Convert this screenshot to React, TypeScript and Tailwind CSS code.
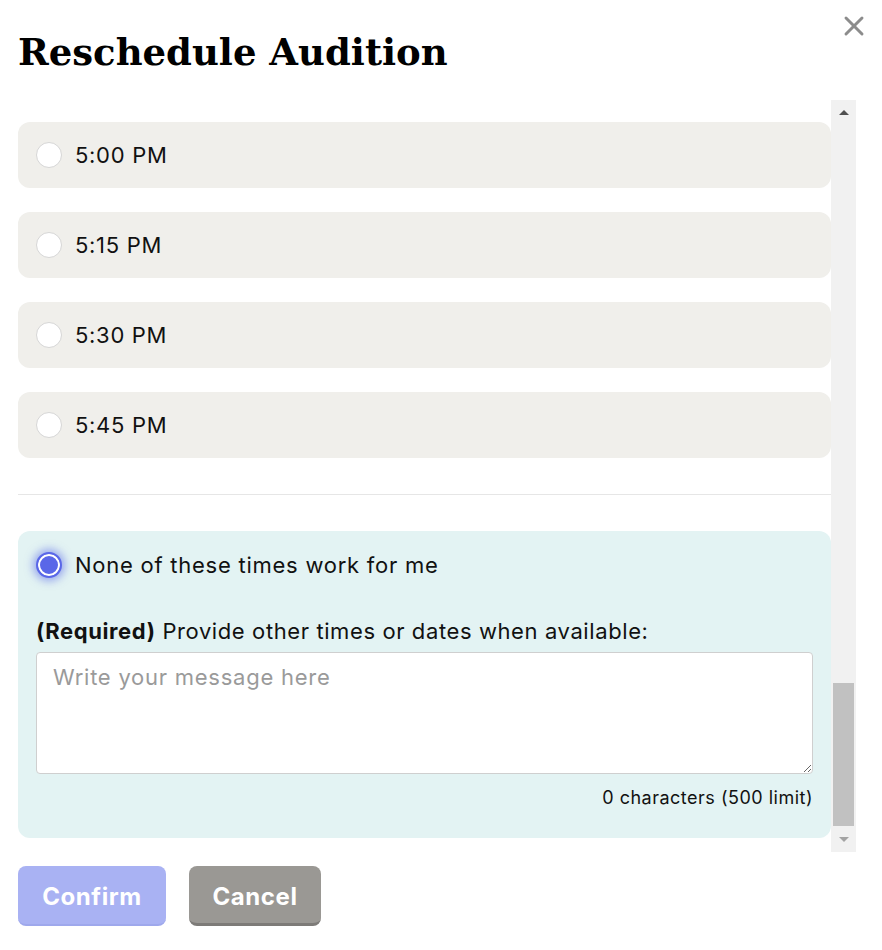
import { X } from "lucide-react"

const times = ["5:00 PM", "5:15 PM", "5:30 PM", "5:45 PM"]

function Radio({ checked }: { checked?: boolean }) {
  if (checked) {
    return (
      <span className="w-[26px] h-[26px] shrink-0 rounded-full bg-[#5a67e8] border-2 border-[#5a67e8] shadow-[inset_0_0_0_2px_#ffffff,0_0_8px_3px_rgba(90,103,232,0.55)]" />
    )
  }
  return <span className="w-[26px] h-[26px] shrink-0 rounded-full bg-white border border-[#d6d6d6]" />
}

export default function App() {
  return (
    <div className="w-[882px] h-[950px] bg-white relative overflow-hidden" style={{ fontFamily: "Inter, 'Noto Sans', sans-serif" }}>
      <button className="absolute right-[12px] top-[10px] text-[#8c8c8c]">
        <X className="w-[32px] h-[32px]" strokeWidth={2.2} />
      </button>

      <div className="h-[100px] pl-[18px] flex items-center">
        <h1 className="text-[37px] font-bold text-black pt-[6px]" style={{ fontFamily: "'DejaVu Serif', 'Liberation Serif', serif" }}>
          Reschedule Audition
        </h1>
      </div>

      <div className="flex h-[752px] pl-[18px]">
        <div className="w-[813px] overflow-hidden">
          <div className="pt-[22px] flex flex-col gap-6">
            {times.map((t) => (
              <label key={t} className="h-[66px] rounded-xl bg-[#f0efeb] flex items-center gap-[13px] pl-[18px] text-[22px] tracking-[0.7px] text-[#111]">
                <Radio />
                <span>{t}</span>
              </label>
            ))}
          </div>

          <div className="mt-[36px] border-t border-[#e6e6e6]" />

          <div className="mt-[36px] h-[307px] rounded-xl bg-[#e3f3f3] px-[18px] pt-[21px]">
            <div className="flex items-center gap-[13px] text-[22px] tracking-[0.75px] text-[#111] leading-[26px]">
              <Radio checked />
              <span>None of these times work for me</span>
            </div>
            <p className="mt-[40px] text-[22px] tracking-[0.6px] text-[#111] leading-[26px]">
              <span className="font-bold">(Required)</span> Provide other times or dates when available:
            </p>
            <textarea
              className="mt-[8px] block w-full h-[122px] rounded border border-[#cfcfcf] bg-white px-[16px] py-[8px] text-[22px] tracking-[0.75px] placeholder:text-[#9a9a9a] resize-y"
              placeholder="Write your message here"
            />
            <p className="mt-[10px] text-right text-[18px] tracking-[0.5px] text-[#111]">0 characters (500 limit)</p>
          </div>
        </div>

        <div className="w-[25px] bg-[#f1f1f1] flex flex-col items-center">
          <div className="h-[25px] flex items-center justify-center">
            <span className="w-0 h-0 border-l-[5px] border-r-[5px] border-b-[5px] border-l-transparent border-r-transparent border-b-[#505050]" />
          </div>
          <div className="flex-1" />
          <div className="w-[21px] h-[143px] bg-[#c1c1c1]" />
          <div className="h-[26px] flex items-center justify-center">
            <span className="w-0 h-0 border-l-[5px] border-r-[5px] border-t-[5px] border-l-transparent border-r-transparent border-t-[#a3a3a3]" />
          </div>
        </div>
      </div>

      <div className="flex gap-[23px] pl-[18px] mt-[14px]">
        <button className="w-[148px] h-[60px] pt-[4px] rounded-lg bg-[#a9b2f3] border-b-2 border-[#9ea8ec] text-white text-[24px] tracking-[0.6px] font-bold">
          Confirm
        </button>
        <button className="w-[132px] h-[60px] pt-[4px] rounded-lg bg-[#9a9894] border-b-[3px] border-[#7d7b78] text-white text-[24px] tracking-[0.6px] font-bold">
          Cancel
        </button>
      </div>
    </div>
  )
}
